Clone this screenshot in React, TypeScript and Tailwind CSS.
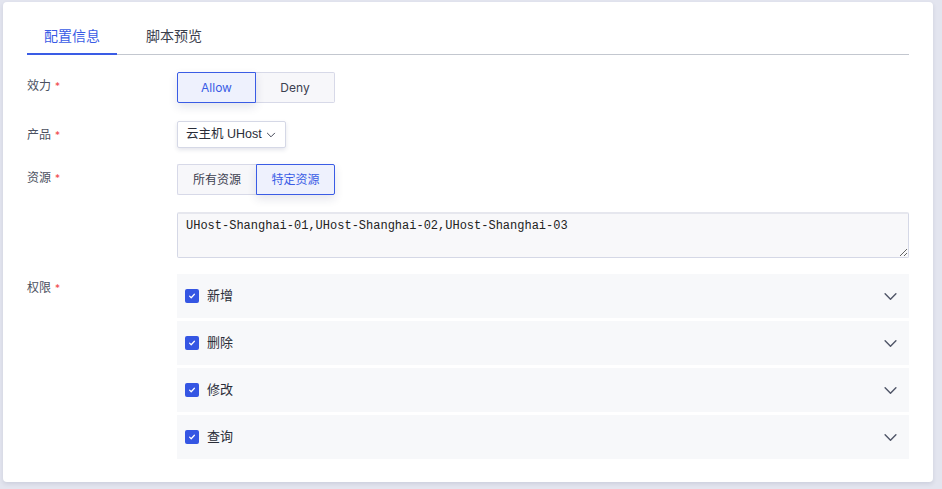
import { useState } from "react";

const font = { fontFamily: 'Inter, "Noto Sans CJK SC", sans-serif' };

function Label({ text }: { text: string }) {
  return (
    <div className="w-[150px] shrink-0 pt-1 text-[12px] leading-5 text-[#4b5060]">
      {text}
      <span className="ml-1 text-[10px] text-[#f04848] align-top">*</span>
    </div>
  );
}

function Segmented({ options, active }: { options: string[]; active: string }) {
  return (
    <div className="flex">
      {options.map((o, i) => {
        const on = o === active;
        return (
          <button
            key={o}
            className={
              "h-[31px] w-[79px] text-[12px] " +
              (i === 0 ? "rounded-l-[2px] " : "rounded-r-[2px] ") +
              (on
                ? "relative z-10 border border-[#3a5ce5] bg-[#eef1fd] text-[#3a5ce5] shadow-[0_4px_10px_rgba(30,40,90,0.12)]"
                : "border border-[#d7d9e8] bg-[#f7f7fa] text-[#3c4050] " + (i === 0 ? "border-r-0" : "border-l-0"))
            }
          >
            {o}
          </button>
        );
      })}
    </div>
  );
}

function Chevron({ className }: { className?: string }) {
  return (
    <svg viewBox="0 0 16 10" className={className} fill="none" stroke="currentColor" strokeWidth="1.6" strokeLinecap="round" strokeLinejoin="round">
      <path d="M2 2l6 6 6-6" />
    </svg>
  );
}

function PermRow({ text }: { text: string }) {
  const [checked, setChecked] = useState(true);
  return (
    <div className="flex h-[44px] items-center bg-[#f7f8fa] pl-2 pr-[11px]">
      <button
        onClick={() => setChecked(!checked)}
        className={
          "flex h-[14px] w-[14px] items-center justify-center rounded-[2px] " +
          (checked ? "bg-[#3556e3]" : "border border-[#c8cbd9] bg-white")
        }
      >
        {checked && (
          <svg viewBox="0 0 10 10" className="h-[8px] w-[8px]" fill="none" stroke="white" strokeWidth="1.5" strokeLinecap="round" strokeLinejoin="round">
            <path d="M2 5.2l2 2 4-4.4" />
          </svg>
        )}
      </button>
      <span className="ml-2 text-[13px] text-[#2a2d38]">{text}</span>
      <Chevron className="ml-auto h-[9px] w-[15px] text-[#505668]" />
    </div>
  );
}

export default function App() {
  return (
    <div className="h-screen w-full bg-[#e3e5ef] pl-[3px] pt-[2px]" style={font}>
      <div className="h-[480px] w-[930px] rounded-[4px] bg-white px-6 pt-[24px] shadow-[0_2px_4px_rgba(40,50,90,0.12)]">
        {/* Tabs */}
        <div className="flex w-[882px] gap-3 border-b border-[#c3c7cf]">
          <div className="-mb-px border-b-2 border-[#3a5ce5] px-[17px] pb-[7px] text-[14px] leading-5 text-[#3a5ce5]">
            配置信息
          </div>
          <div className="px-[17px] pb-[7px] text-[14px] leading-5 text-[#3a3e4c]">脚本预览</div>
        </div>

        {/* Effect */}
        <div className="mt-[17px] flex">
          <Label text="效力" />
          <Segmented options={["Allow", "Deny"]} active="Allow" />
        </div>

        {/* Product */}
        <div className="mt-[18px] flex">
          <Label text="产品" />
          <button
            className="flex h-[27px] w-[109px] items-center whitespace-nowrap rounded-[2px] border border-[#d5d8e6] bg-white pl-2 pr-[9px] text-[12.5px] text-[#2a2d38] shadow-[0_2px_4px_rgba(30,40,90,0.12)]"
            style={{ fontFamily: '"Liberation Sans", "Noto Sans CJK SC", sans-serif' }}
          >
            云主机 UHost
            <Chevron className="ml-auto h-[6px] w-[10px] text-[#3c4050]" />
          </button>
        </div>

        {/* Resource */}
        <div className="mt-[16px] flex">
          <Label text="资源" />
          <Segmented options={["所有资源", "特定资源"]} active="特定资源" />
        </div>

        <div className="mt-[17px] flex">
          <div className="w-[150px] shrink-0" />
          <textarea
            defaultValue="UHost-Shanghai-01,UHost-Shanghai-02,UHost-Shanghai-03"
            className="h-[46px] w-[732px] rounded-[2px] border border-[#d5d8e6] border-t-2 border-t-[#e6e7ee] bg-[#f8f8fa] px-2 pt-[4px] text-[12px] leading-4 text-[#222] outline-none"
            style={{ fontFamily: '"Liberation Mono", monospace' }}
          />
        </div>

        {/* Permissions */}
        <div className="mt-[16px] flex">
          <Label text="权限" />
          <div className="flex w-[732px] flex-col gap-[3px]">
            {["新增", "删除", "修改", "查询"].map((t) => (
              <PermRow key={t} text={t} />
            ))}
          </div>
        </div>
      </div>
    </div>
  );
}
